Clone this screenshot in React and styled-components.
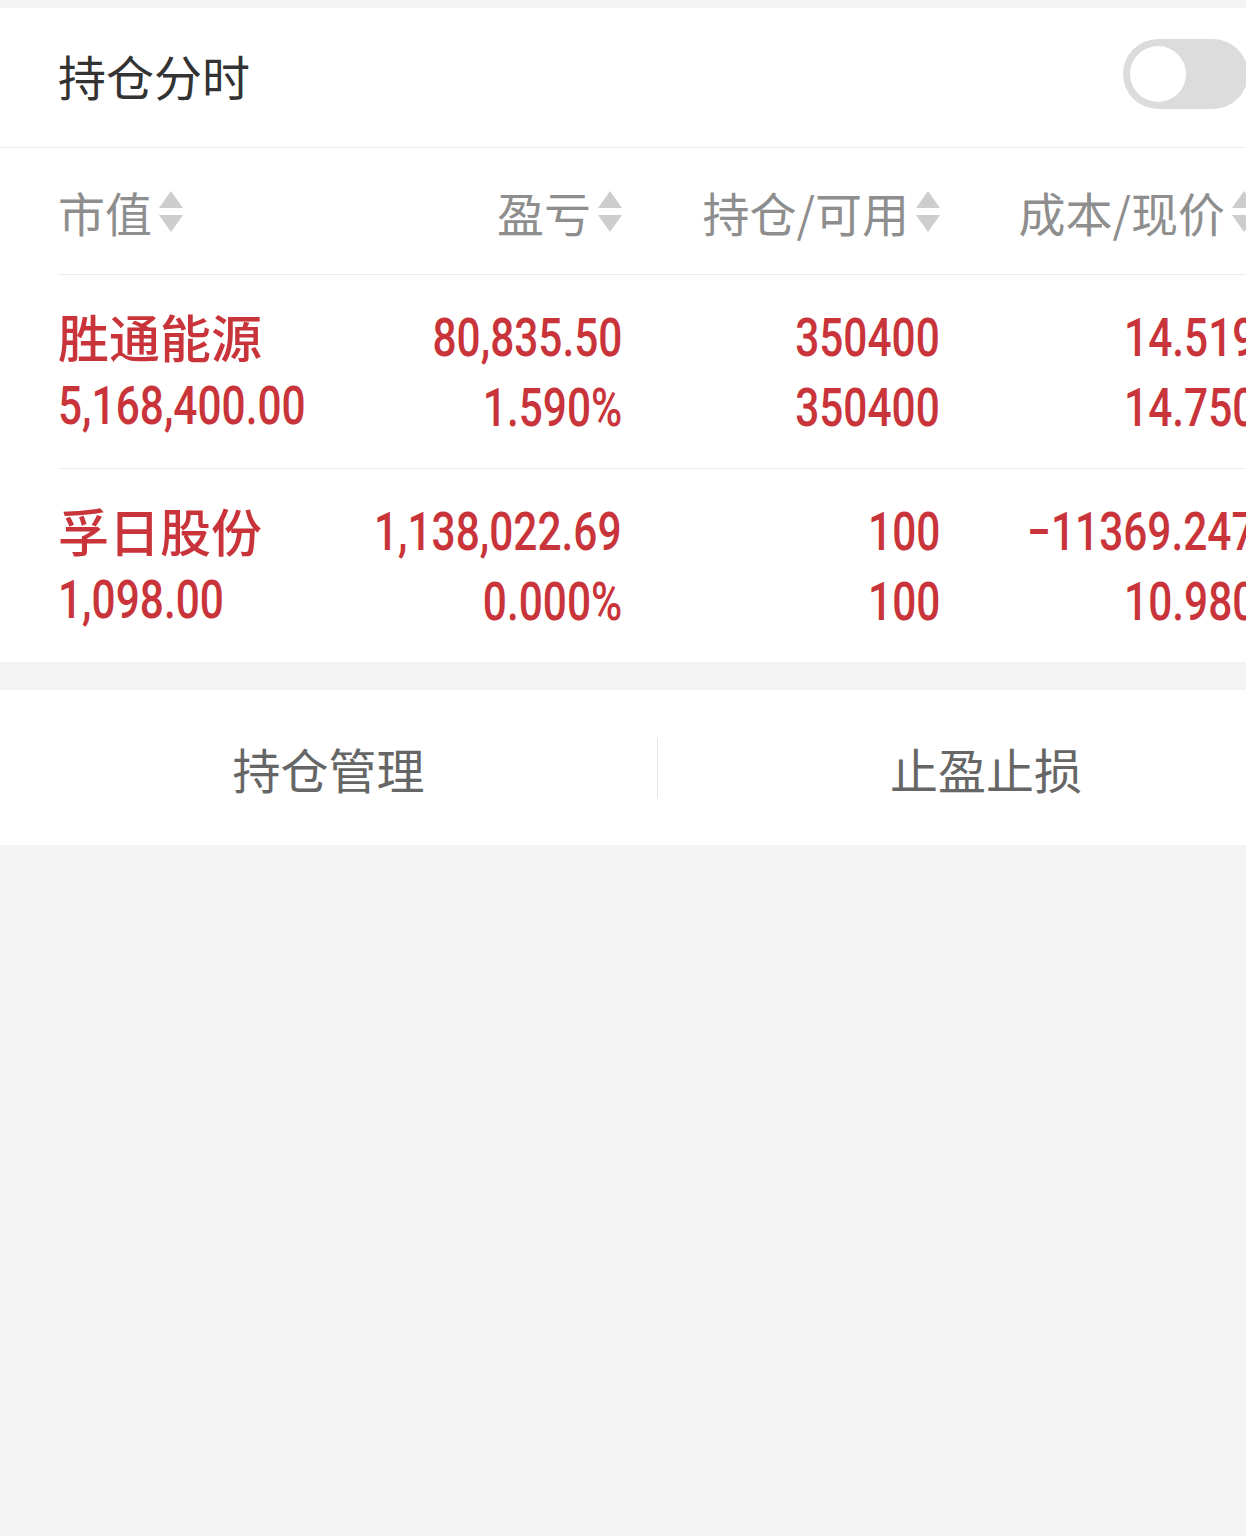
import styled, { createGlobalStyle } from 'styled-components';

const RED = '#c8343a';

const GlobalStyle = createGlobalStyle`
  html, body {
    margin: 0;
    padding: 0;
    background: #f4f4f4;
  }
  body {
    font-family: "Noto Sans CJK SC", "Noto Sans", sans-serif;
    overflow: hidden;
  }
`;

const columns = [
  { title: '市值', align: 'left' },
  { title: '盈亏', align: 'right' },
  { title: '持仓/可用', align: 'right' },
  { title: '成本/现价', align: 'right' },
];

const positions = [
  {
    name: '胜通能源',
    value: '5,168,400.00',
    profit: '80,835.50',
    ratio: '1.590%',
    hold: '350400',
    usable: '350400',
    cost: '14.519',
    price: '14.750',
  },
  {
    name: '孚日股份',
    value: '1,098.00',
    profit: '1,138,022.69',
    ratio: '0.000%',
    hold: '100',
    usable: '100',
    cost: '−11369.247',
    price: '10.980',
  },
];

function SortIcon() {
  return (
    <SortSvg viewBox="0 0 24 42" width="24" height="42">
      <path d="M12 0 L24 17 L0 17 Z" fill="#cdcdcd" />
      <path d="M0 24 L24 24 L12 41 Z" fill="#cdcdcd" />
    </SortSvg>
  );
}

export default function App() {
  return (
    <Page>
      <GlobalStyle />
      <Sheet>
        <Card>
          <TitleBar>
            <Title>持仓分时</Title>
            <Toggle>
              <Knob />
            </Toggle>
          </TitleBar>
          <Table>
            <HeadRow>
              {columns.map(({ title, align }) => (
                <HeadCell key={title} $align={align}>
                  {title}
                  <SortIcon />
                </HeadCell>
              ))}
            </HeadRow>
            {positions.map((p) => (
              <Row key={p.name}>
                <Cell $align="left">
                  <Name>{p.name}</Name>
                  <Num $align="left">{p.value}</Num>
                </Cell>
                <Cell $align="right">
                  <Num $align="right">{p.profit}</Num>
                  <Num $align="right">{p.ratio}</Num>
                </Cell>
                <Cell $align="right">
                  <Num $align="right">{p.hold}</Num>
                  <Num $align="right">{p.usable}</Num>
                </Cell>
                <Cell $align="right">
                  <Num $align="right">{p.cost}</Num>
                  <Num $align="right">{p.price}</Num>
                </Cell>
              </Row>
            ))}
          </Table>
        </Card>
        <ActionBar>
          <Action>持仓管理</Action>
          <Action>止盈止损</Action>
        </ActionBar>
      </Sheet>
    </Page>
  );
}

const Page = styled.div`
  width: 100%;
  min-height: 1536px;
  overflow: hidden;
  background: #f4f4f4;
  padding-top: 8px;
  box-sizing: border-box;
`;

const Sheet = styled.div`
  width: 1314px;
`;

const Card = styled.div`
  background: #fff;
`;

const TitleBar = styled.div`
  height: 139px;
  display: flex;
  align-items: center;
  justify-content: space-between;
  padding: 0 58px;
  border-bottom: 1px solid #ececec;
`;

const Title = styled.div`
  font-size: 48px;
  color: #333;
  line-height: 1;
  margin-top: -6px;
`;

const Toggle = styled.div`
  position: relative;
  width: 125px;
  height: 70px;
  margin-right: 8px;
  margin-top: -8px;
  border-radius: 35px;
  background: #dcdcdc;
`;

const Knob = styled.div`
  position: absolute;
  left: 7px;
  top: 7px;
  width: 56px;
  height: 56px;
  border-radius: 50%;
  background: #fff;
`;

const Table = styled.div`
  padding: 0 58px;
`;

const grid = `
  display: grid;
  grid-template-columns: 282px 282px 318px 316px;
`;

const HeadRow = styled.div`
  ${grid}
  height: 126px;
  align-items: center;
  border-bottom: 1px solid #ececec;
`;

const HeadCell = styled.div`
  display: flex;
  align-items: center;
  justify-content: ${(p) => (p.$align === 'right' ? 'flex-end' : 'flex-start')};
  gap: 7px;
  font-size: 47px;
  color: #8e8e8e;
  line-height: 1;
`;

const SortSvg = styled.svg`
  flex: none;
  margin-top: 2px;
`;

const Row = styled.div`
  ${grid}
  padding: 28px 0 25px;
  border-bottom: 1px solid #ececec;

  &:last-child {
    border-bottom: none;
  }
`;

const Cell = styled.div`
  display: flex;
  flex-direction: column;
  align-items: ${(p) => (p.$align === 'right' ? 'flex-end' : 'flex-start')};
  color: ${RED};
  white-space: nowrap;
`;

const Name = styled.div`
  height: 70px;
  line-height: 70px;
  font-size: 51px;
  font-weight: 500;
  margin-top: -2px;
`;

/* no condensed DIN-like face is installed, so Roboto is narrowed to match */
const Num = styled.div`
  height: 70px;
  line-height: 70px;
  font-family: Roboto, "Noto Sans", sans-serif;
  font-size: 53px;
  font-weight: 500;
  transform: scaleX(0.8);
  transform-origin: ${(p) => (p.$align === 'right' ? 'right' : 'left')} center;
`;

const ActionBar = styled.div`
  margin-top: 28px;
  height: 155px;
  background: #fff;
  display: grid;
  grid-template-columns: 1fr 1fr;
  align-items: center;
`;

const Action = styled.div`
  text-align: center;
  font-size: 48px;
  color: #666;
  line-height: 60px;

  & + & {
    border-left: 1px solid #e6e6e6;
  }
`;
